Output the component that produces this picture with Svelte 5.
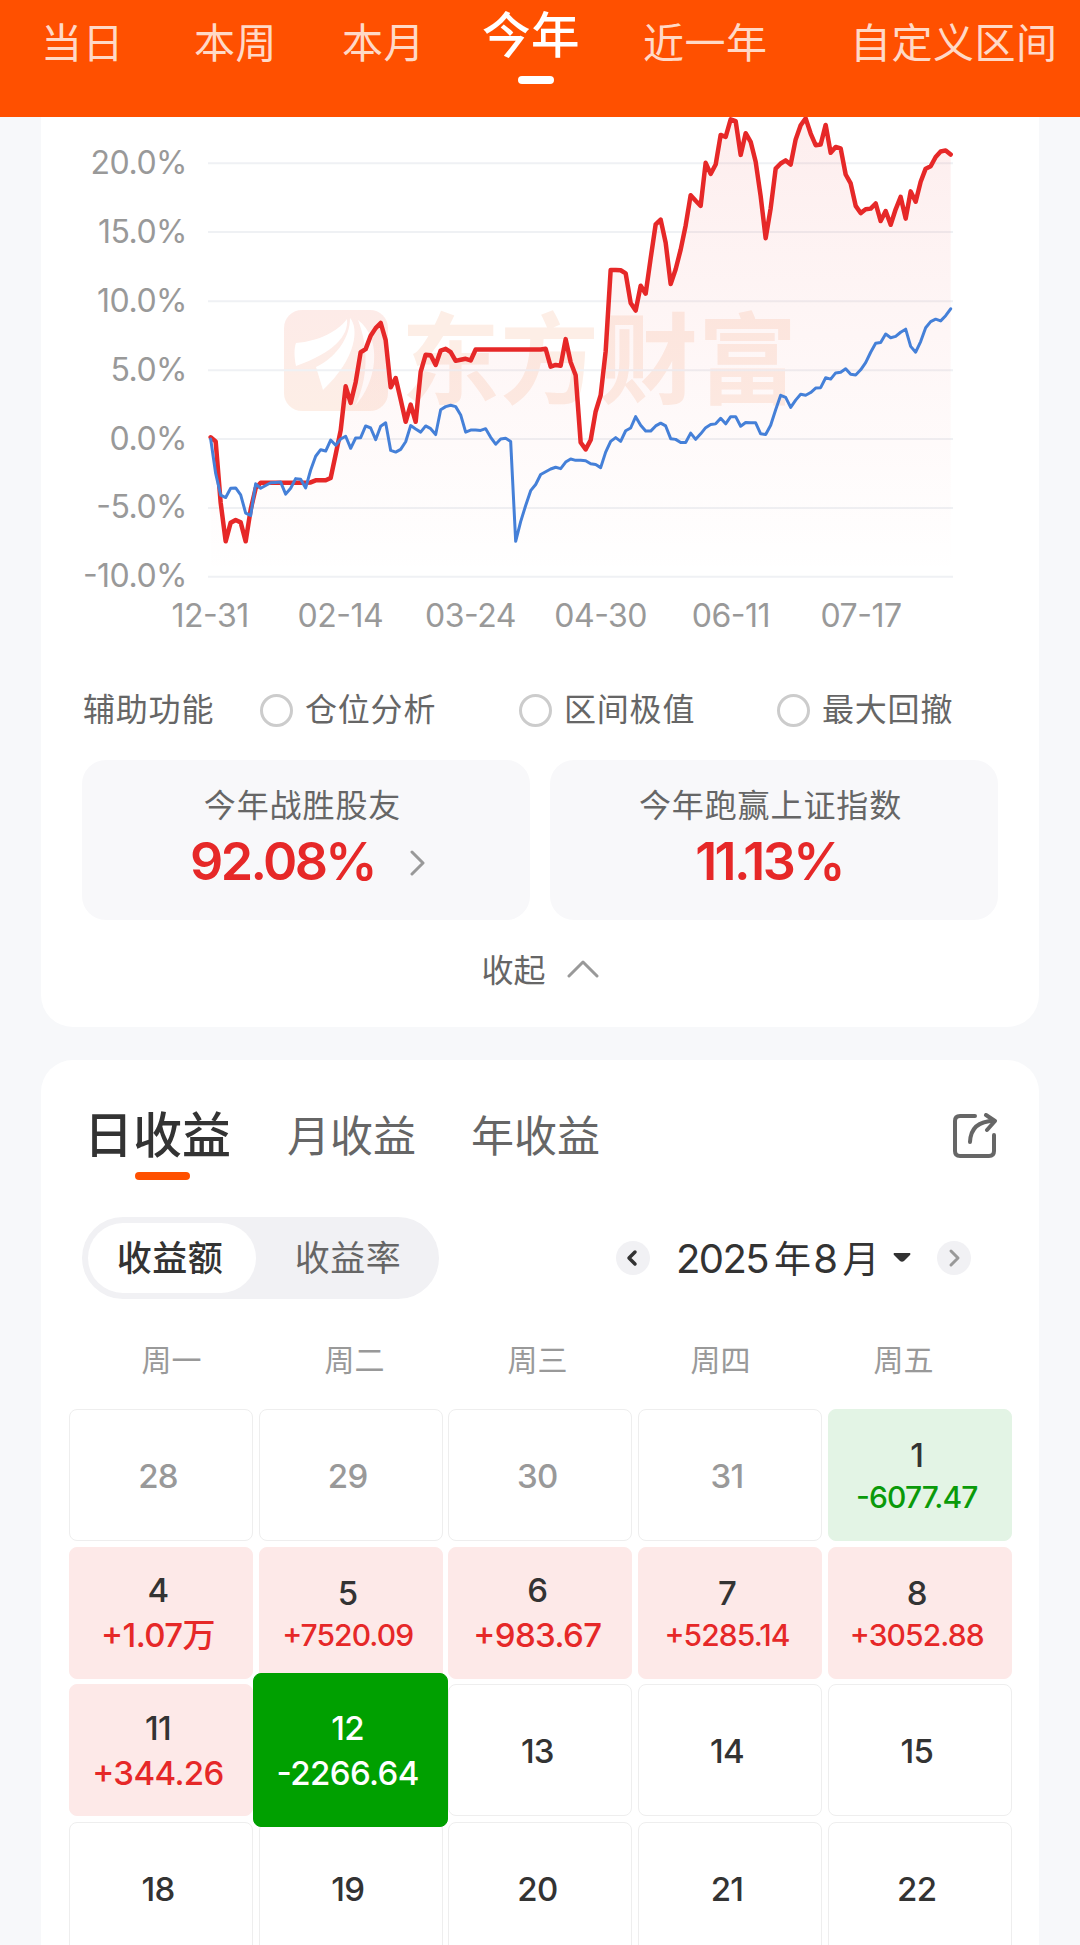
<script>
  const ranges = ['当日', '本周', '本月', '今年', '近一年', '自定义区间']
  const activeRange = '今年'

  const percentTicks = ['20.0%', '15.0%', '10.0%', '5.0%', '0.0%', '-5.0%', '-10.0%']
  const dateTicks = ['12-31', '02-14', '03-24', '04-30', '06-11', '07-17']
  const gridLines = [154, 354, 555, 755, 955, 1155, 1355]

  // one y value per trading day
  const mine = [
    950, 962, 1140, 1252, 1198, 1190, 1197, 1252, 1160, 1098, 1082, 1082, 1082, 1082, 1082,
    1082, 1082, 1082, 1082, 1082, 1081, 1075, 1075, 1075, 1068, 1000, 930, 802, 850, 790,
    703, 694, 655, 633, 618, 668, 805, 778, 840, 905, 855, 905, 760, 710, 712,
    740, 698, 693, 703, 728, 725, 722, 727, 695, 695, 695, 695, 695, 695, 695,
    695, 695, 695, 695, 695, 695, 695, 693, 745, 740, 742, 665, 732, 770, 965,
    985, 958, 875, 828, 700, 464, 464, 465, 474, 560, 582, 510, 533, 430, 332,
    318, 385, 505, 462, 405, 335, 247, 263, 278, 153, 185, 158, 72, 78, 27,
    32, 130, 67, 92, 150, 250, 372, 285, 170, 155, 146, 158, 85, 44, 24,
    68, 102, 100, 43, 124, 107, 111, 187, 213, 278, 299, 288, 286, 271, 322,
    293, 333, 288, 252, 315, 236, 266, 208, 170, 163, 136, 120, 117, 129
  ]
  const index = [
    955, 1055, 1118, 1125, 1098, 1097, 1117, 1170, 1177, 1085, 1098, 1090, 1082, 1081, 1080,
    1115, 1098, 1070, 1072, 1097, 1045, 1005, 986, 990, 958, 973, 955, 947, 982, 952,
    951, 917, 923, 957, 918, 908, 988, 993, 985, 963, 916, 926, 935, 917, 925,
    942, 870, 861, 857, 861, 885, 935, 929, 929, 930, 925, 950, 970, 955, 953,
    962, 1252, 1195, 1148, 1105, 1087, 1058, 1050, 1042, 1037, 1041, 1022, 1013, 1017, 1017,
    1018, 1027, 1029, 1038, 993, 962, 951, 962, 931, 923, 890, 915, 932, 932, 917,
    909, 917, 954, 956, 965, 965, 938, 956, 940, 922, 913, 911, 895, 911, 890,
    890, 918, 907, 908, 908, 940, 942, 915, 870, 828, 834, 863, 842, 825, 828,
    820, 807, 806, 777, 781, 763, 761, 751, 767, 769, 754, 733, 703, 677, 675,
    650, 661, 657, 645, 636, 686, 703, 672, 632, 614, 607, 612, 597, 577
  ]

  const toPoints = (series) => series.map((y, i) => `${452 + i * 15},${y}`).join(' ')
  const minePoints = toPoints(mine)
  const indexPoints = toPoints(index)
  const areaPoints = `452,1355 ${minePoints} 2672,1355`

  const helpers = ['仓位分析', '区间极值', '最大回撤']
  const weekdays = ['周一', '周二', '周三', '周四', '周五']

  const days = [
    { day: 28, muted: true },
    { day: 29, muted: true },
    { day: 30, muted: true },
    { day: 31, muted: true },
    { day: 1, profit: '-6077.47', small: true },
    { day: 4, profit: '+1.07万' },
    { day: 5, profit: '+7520.09', small: true },
    { day: 6, profit: '+983.67' },
    { day: 7, profit: '+5285.14', small: true },
    { day: 8, profit: '+3052.88', small: true },
    { day: 11, profit: '+344.26' },
    { day: 12, profit: '-2266.64', selected: true },
    { day: 13 },
    { day: 14 },
    { day: 15 },
    { day: 18 },
    { day: 19 },
    { day: 20 },
    { day: 21 },
    { day: 22 }
  ]
</script>

<div class="page">
  <header class="rangeBar">
    {#each ranges as range}
      <div class="range" class:active={range === activeRange}>{range}</div>
    {/each}
  </header>

  <section class="card chartCard">
    <div class="chart">
      <svg class="watermark" viewBox="0 -50 540 190" aria-hidden="true">
        <defs>
          <linearGradient id="logoFill" x1="0" y1="0" x2="0" y2="1">
            <stop offset="0" stop-color="#fdebe8" />
            <stop offset="1" stop-color="#fdeee6" />
          </linearGradient>
        </defs>
        <rect x="0" y="0" width="104" height="101" rx="18" fill="url(#logoFill)" />
        <path d="M12 33C36 31 54 21 63 9C65 26 49 43 12 56C10 47 10 38 12 33Z" fill="#fff" />
        <path d="M66 8C75 18 73 48 39 80L32 57C51 48 66 29 66 8Z" fill="#fff" />
        <path d="M74 10C99 29 93 72 71 96C84 69 85 38 74 10Z" fill="#fff" />
        <text x="117" y="86">东方财富</text>
      </svg>
      <div class="percentAxis">
        {#each percentTicks as tick}
          <span>{tick}</span>
        {/each}
      </div>
      <svg class="plot" viewBox="444 20 2235 1340" preserveAspectRatio="none">
        <defs>
          <linearGradient id="area" x1="0" y1="0" x2="0" y2="1">
            <stop offset="0" stop-color="#e92a2a" stop-opacity="0.08" />
            <stop offset="1" stop-color="#e92a2a" stop-opacity="0" />
          </linearGradient>
        </defs>
        {#each gridLines as y}
          <line class="grid" x1="444" x2="2679" y1={y} y2={y} />
        {/each}
        <polygon points={areaPoints} fill="url(#area)" />
        <polyline class="line mine" points={minePoints} />
        <polyline class="line index" points={indexPoints} />
      </svg>
    </div>
    <div class="dateAxis">
      {#each dateTicks as tick}
        <span>{tick}</span>
      {/each}
    </div>

    <div class="helpers">
      <span>辅助功能</span>
      {#each helpers as helper}
        <label class="helper"><i class="radio"></i>{helper}</label>
      {/each}
    </div>

    <div class="stats">
      <div class="stat">
        <div class="statLabel">今年战胜股友</div>
        <div class="statValue">
          92.08%
          <svg class="more" width="16" height="26" viewBox="0 0 16 26">
            <path d="M2 2L13 13L2 24" />
          </svg>
        </div>
      </div>
      <div class="stat">
        <div class="statLabel">今年跑赢上证指数</div>
        <div class="statValue">11.13%</div>
      </div>
    </div>

    <div class="collapse">
      收起
      <svg width="32" height="19" viewBox="0 0 32 19"><path d="M2 17L16 3L30 17" /></svg>
    </div>
  </section>

  <section class="card calendarCard">
    <div class="tabs">
      <div class="tab current">日收益</div>
      <div class="tab">月收益</div>
      <div class="tab">年收益</div>
      <svg class="share" width="46" height="46" viewBox="0 0 46 46">
        <path d="M23 3H8Q3 3 3 8V38Q3 43 8 43H37Q42 43 42 38V22" />
        <path d="M18 29Q19 8 42 8" />
        <path d="M34 2L43 8L35 17" />
      </svg>
    </div>

    <div class="controls">
      <div class="segment">
        <div class="option chosen">收益额</div>
        <div class="option">收益率</div>
      </div>
      <div class="monthPicker">
        <div class="round">
          <svg width="34" height="34" viewBox="0 0 34 34"><path d="M19 11L13 17L19 23" /></svg>
        </div>
        <div class="month">2025<b>年</b>8<b>月</b></div>
        <svg class="caret" width="18" height="10" viewBox="0 0 18 10">
          <path d="M1 0H17Q18 1 17 2L11 8Q9 9.500 7 8L1 2Q0 1 1 0Z" />
        </svg>
        <div class="round next">
          <svg width="34" height="34" viewBox="0 0 34 34"><path d="M14 10L21 17L14 24" /></svg>
        </div>
      </div>
    </div>

    <div class="weekdays">
      {#each weekdays as weekday}
        <span>{weekday}</span>
      {/each}
    </div>

    <div class="days">
      {#each days as item}
        <div
          class="day"
          class:muted={item.muted}
          class:gain={item.profit?.startsWith('+')}
          class:loss={item.profit?.startsWith('-')}
          class:selected={item.selected}
        >
          <div class="date">{item.day}</div>
          {#if item.profit}
            <div class="profit" class:small={item.small}>{item.profit}</div>
          {/if}
        </div>
      {/each}
    </div>
  </section>
</div>

<style>
  :global(body) {
    background: #f7f8fa;
  }

  .page {
    width: 1080px;
    height: 1945px;
    overflow: hidden;
    background: #f7f8fa;
    color: #333;
    font-family: Inter, 'Noto Sans CJK SC', sans-serif;
  }

  .page * {
    box-sizing: border-box;
  }

  svg {
    display: block;
    fill: none;
    stroke-linecap: round;
    stroke-linejoin: round;
  }

  .rangeBar {
    display: grid;
    grid-template-columns: 153px 148px 140px 161px 207px auto;
    height: 117px;
    padding-left: 41px;
    background: #ff5000;
  }

  .range {
    height: 86px;
    font-size: 41px;
    line-height: 86px;
    letter-spacing: 0.500px;
    white-space: nowrap;
    color: #ffd9c7;
  }

  .range.active {
    width: 98px;
    font-size: 48.500px;
    font-weight: 500;
    line-height: 72px;
    color: #fff;
  }

  .range.active::after {
    content: '';
    display: block;
    width: 36px;
    height: 8px;
    margin: 4px auto 0 36px;
    border-radius: 4px;
    background: #fff;
  }

  .card {
    width: 998px;
    margin: 0 auto;
    background: #fff;
  }

  .chartCard {
    height: 910px;
    border-radius: 0 0 32px 32px;
  }

  .chart {
    position: relative;
    display: flex;
    height: 462px;
  }

  .watermark {
    position: absolute;
    left: 243px;
    top: 143px;
    width: 540px;
    height: 190px;
  }

  .watermark text {
    font-family: 'Noto Sans CJK SC', sans-serif;
    font-size: 99px;
    font-weight: 700;
    fill: #fdeee6;
  }

  .percentAxis {
    width: 146px;
    margin-right: 21px;
    padding-top: 12px;
    text-align: right;
  }

  .percentAxis span {
    display: block;
    height: 68.900px;
    line-height: 68.900px;
  }

  .percentAxis,
  .dateAxis {
    font-size: 32px;
    letter-spacing: -0.500px;
    font-feature-settings: 'case';
    color: #999;
  }

  .plot {
    position: relative;
    width: 745px;
    height: 461.500px;
  }

  .grid {
    stroke: #eff1f4;
    stroke-width: 2;
    vector-effect: non-scaling-stroke;
  }

  .line {
    vector-effect: non-scaling-stroke;
  }

  .mine {
    stroke: #e62828;
    stroke-width: 4.500;
  }

  .index {
    stroke: #4580d8;
    stroke-width: 3;
  }

  .dateAxis {
    display: grid;
    grid-template-columns: repeat(6, 130.200px);
    height: 72px;
    padding-left: 104px;
    line-height: 73px;
    text-align: center;
  }

  .helpers {
    display: grid;
    grid-template-columns: 177px 259px 258px auto;
    align-items: center;
    height: 109px;
    padding: 9px 0 0 42px;
    font-size: 32px;
    line-height: 42px;
    letter-spacing: 0.800px;
    color: #666;
  }

  .helper {
    display: flex;
    align-items: center;
    gap: 12px;
  }

  .radio {
    width: 33px;
    height: 33px;
    border: 3px solid #ccc;
    border-radius: 50%;
  }

  .stats {
    display: flex;
    gap: 20px;
    padding: 0 41px;
  }

  .stat {
    width: 448px;
    height: 160px;
    padding-top: 22px;
    border-radius: 24px;
    background: #f8f8fa;
    text-align: center;
  }

  .statLabel {
    padding-right: 7px;
    font-size: 32px;
    line-height: 48px;
    letter-spacing: 0.900px;
    color: #666;
  }

  .statValue {
    display: flex;
    align-items: center;
    justify-content: center;
    gap: 35px;
    height: 62px;
    padding-right: 10px;
    font-size: 52px;
    font-weight: 600;
    letter-spacing: -2.600px;
    color: #e62828;
  }

  .more {
    margin: 3px -14px 0 0;
    stroke: #999;
    stroke-width: 3;
  }

  .collapse {
    display: flex;
    align-items: center;
    justify-content: center;
    gap: 21px;
    height: 96px;
    font-size: 32px;
    color: #666;
  }

  .collapse svg {
    stroke: #999;
    stroke-width: 3;
  }

  .calendarCard {
    height: 940px;
    margin-top: 33px;
    padding-top: 36px;
    border-radius: 32px 32px 0 0;
  }

  .tabs {
    display: flex;
    height: 90px;
    padding: 0 41px 0 43px;
    line-height: 80px;
    color: #666;
  }

  .tab {
    margin-right: 55px;
    font-size: 43px;
  }

  .tab.current {
    margin-right: 56px;
    font-size: 49px;
    font-weight: 500;
    color: #333;
  }

  .tab.current::after {
    content: '';
    display: block;
    width: 55px;
    height: 8px;
    margin: -4px 0 0 51px;
    border-radius: 4px;
    background: #ff5000;
  }

  .share {
    margin: 17px 0 0 auto;
    stroke: #666;
    stroke-width: 4;
  }

  .controls {
    display: flex;
    align-items: center;
    justify-content: space-between;
    height: 82px;
    margin: 31px 68px 0 41px;
  }

  .segment {
    display: flex;
    width: 357px;
    height: 82px;
    padding: 6px;
    border-radius: 41px;
    background: #f1f1f4;
  }

  .option {
    width: 168px;
    border-radius: 35px;
    font-size: 35px;
    line-height: 70px;
    letter-spacing: 0.500px;
    text-align: center;
    color: #666;
  }

  .option + .option {
    margin-left: 8px;
  }

  .option.chosen {
    padding-right: 4px;
    background: #fff;
    font-weight: 500;
    color: #333;
  }

  .monthPicker {
    display: flex;
    align-items: center;
  }

  .month {
    display: flex;
    align-items: center;
    width: 200px;
    margin-left: 26px;
    font-size: 40px;
    letter-spacing: -1.600px;
  }

  .month b {
    margin: -3px 4px 0 6px;
    font-size: 37px;
    font-weight: 400;
  }

  .caret {
    margin: 0 26px 0 17px;
    fill: #333;
  }

  .round {
    width: 34px;
    height: 34px;
    border-radius: 50%;
    background: #f1f1f4;
    stroke: #333;
    stroke-width: 3.500;
  }

  .round.next {
    stroke: #999;
    stroke-width: 3;
  }

  .weekdays {
    display: grid;
    grid-template-columns: repeat(5, 183px);
    height: 110px;
    padding: 16px 0 0 39px;
    font-size: 30px;
    line-height: 90px;
    text-align: center;
    color: #999;
  }

  .days {
    display: grid;
    grid-template-columns: repeat(5, 184px);
    grid-auto-rows: 132px;
    gap: 5.700px;
    padding-left: 28px;
  }

  .day {
    display: flex;
    flex-direction: column;
    align-items: center;
    justify-content: center;
    padding: 1px 6px 0 0;
    border: 1px solid #eee;
    border-radius: 8px;
    font-weight: 500;
  }

  .date {
    font-size: 33px;
    line-height: 44px;
    letter-spacing: -0.700px;
  }

  .muted {
    color: #999;
  }

  .profit {
    font-size: 33px;
    line-height: 46px;
    letter-spacing: -0.600px;
    font-feature-settings: 'case';
  }

  .profit.small {
    font-size: 30px;
    line-height: 41px;
    letter-spacing: -0.900px;
  }

  .gain {
    border-color: #fde9e8;
    background: #fde9e8;
  }

  .gain .profit {
    color: #e62828;
  }

  .loss {
    border-color: #e3f4e5;
    background: #e3f4e5;
  }

  .loss .profit {
    color: #0a9a0a;
  }

  .day.selected {
    z-index: 1;
    margin: -11px -5.500px;
    border-color: #00a000;
    background: #00a000;
    color: #fff;
  }

  .selected .profit {
    color: #fff;
  }
</style>
